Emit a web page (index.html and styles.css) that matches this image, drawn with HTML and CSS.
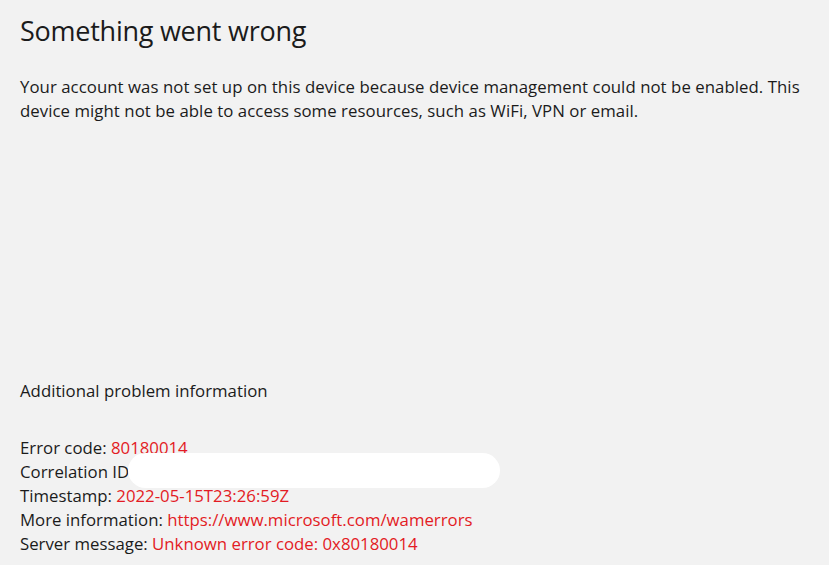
FILE: index.html
```html
<!DOCTYPE html>
<html lang="en">
<head>
<meta charset="utf-8">
<title>Something went wrong</title>
<link rel="stylesheet" href="styles.css">
</head>
<body>
<main class="page">
  <h1 class="title">Something went wrong</h1>
  <p class="message">Your account was not set up on this device because device management could not be enabled. This device might not be able to access some resources, such as WiFi, VPN or email.</p>
  <section class="details">
    <h2 class="details-title">Additional problem information</h2>
    <ul class="info">
      <li>Error code: <span class="val">80180014</span></li>
      <li class="corr">Correlation ID<span class="redact"></span></li>
      <li>Timestamp: <span class="val">2022-05-15T23:26:59Z</span></li>
      <li>More information: <span class="val">https://www.microsoft.com/wamerrors</span></li>
      <li>Server message: <span class="val">Unknown error code: 0x80180014</span></li>
    </ul>
  </section>
</main>
</body>
</html>
```
FILE: styles.css
```css
html, body {
  margin: 0;
  padding: 0;
  background: #f2f2f2;
}
body {
  font-family: "Open Sans", "Noto Sans", sans-serif;
  color: #1b1b1b;
}
.page {
  padding: 11px 20px 0 20px;
}
.title {
  margin: 0;
  font-weight: 400;
  font-size: 27px;
  line-height: 40px;
  letter-spacing: -0.25px;
}
.message {
  margin: 24px 0 0 0;
  font-size: 16.8px;
  line-height: 24px;
  letter-spacing: 0.05px;
}
.details {
  margin-top: 256px;
}
.details-title {
  margin: 0;
  font-weight: 400;
  font-size: 16.8px;
  line-height: 24px;
}
.info {
  list-style: none;
  margin: 33px 0 0 0;
  padding: 0;
  font-size: 16.8px;
  line-height: 24px;
}
.val {
  color: #e31b24;
}
.corr {
  position: relative;
}
.redact {
  position: absolute;
  left: 108px;
  top: -7px;
  width: 372px;
  height: 35px;
  border-radius: 18px;
  background: #ffffff;
}
```
